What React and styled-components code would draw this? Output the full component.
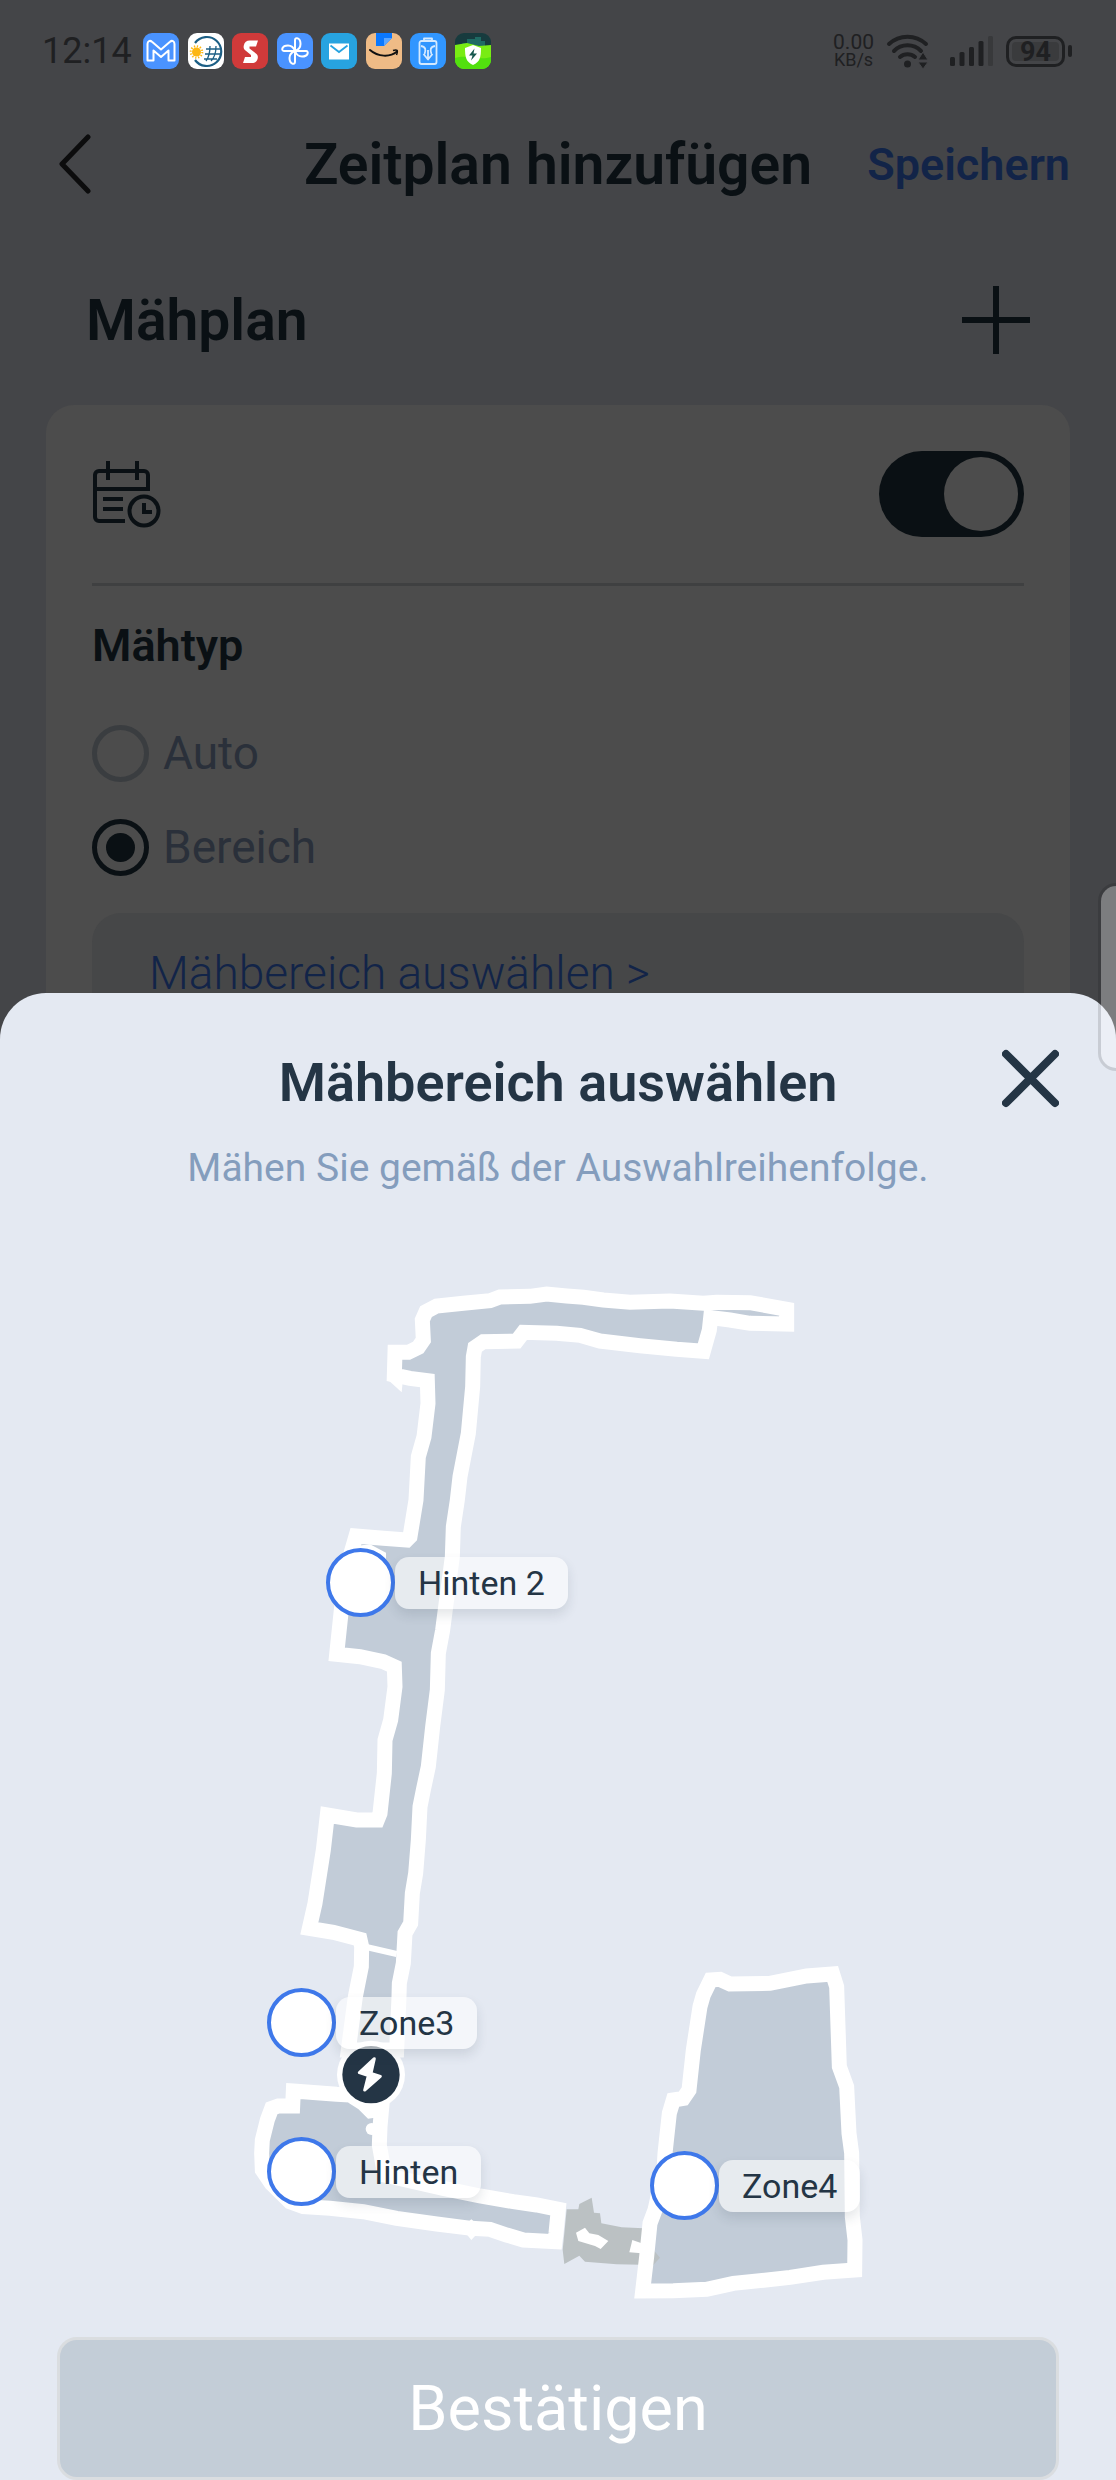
import { useState } from "react";
import styled, { createGlobalStyle } from "styled-components";

const GlobalStyle = createGlobalStyle`
  * {
    box-sizing: border-box;
  }
  body {
    margin: 0;
    background: #444548;
    font-family: Roboto, "Liberation Sans", sans-serif;
  }
  button {
    margin: 0;
    padding: 0;
    border: none;
    background: none;
    font-family: inherit;
    cursor: pointer;
  }
  svg {
    display: block;
    flex: none;
  }
`;

const Screen = styled.div`
  position: relative;
  display: flex;
  flex-direction: column;
  min-height: 100vh;
  overflow: hidden;
`;

const StatusBar = styled.div`
  display: flex;
  align-items: center;
  height: 102px;
  padding: 0 44px 0 42px;
  color: #1f2022;
`;

const Clock = styled.span`
  width: 101px;
  font-size: 36px;
`;

const AppIcons = styled.div`
  display: flex;
  justify-content: space-between;
  width: 348px;
`;

const StatusRight = styled.div`
  display: flex;
  align-items: center;
  gap: 12px;
  margin-left: auto;
`;

const Network = styled.div`
  display: flex;
  align-items: center;
  gap: 12px;
  margin-right: 8px;
`;

const Speed = styled.div`
  display: flex;
  flex-direction: column;
  align-items: center;
  font-size: 21px;
  line-height: 18px;
  & small {
    font-size: 18px;
  }
`;

const Header = styled.header`
  display: grid;
  grid-template-columns: 1fr auto 1fr;
  align-items: center;
  height: 124px;
  padding: 0 46px;
`;

const Title = styled.h1`
  margin: 0;
  font-size: 57px;
  font-weight: 600;
  color: #0a1014;
`;

const BackButton = styled.button`
  justify-self: start;
  && {
    padding: 0 11px;
  }
`;

const SaveButton = styled.button`
  justify-self: end;
  font-size: 45px;
  font-weight: 600;
  color: #122448;
`;

const SectionRow = styled.div`
  display: flex;
  align-items: center;
  justify-content: space-between;
  height: 179px;
  padding: 9px 86px 0;
`;

const SectionTitle = styled.h2`
  margin: 0;
  font-size: 57px;
  font-weight: 600;
  color: #0a1014;
`;

const Card = styled.section`
  margin: 0 46px;
  padding: 0 46px;
  border-radius: 28px 28px 0 0;
  background: #4c4c4c;
`;

const CardTop = styled.div`
  display: flex;
  align-items: center;
  justify-content: space-between;
  height: 181px;
  border-bottom: 3px solid #3f4041;
`;

const Toggle = styled.input`
  appearance: none;
  display: flex;
  align-items: center;
  width: 145px;
  height: 86px;
  margin: 0;
  padding: 0 6px;
  border-radius: 43px;
  background: #0a1014;
  &::before {
    content: "";
    width: 74px;
    height: 74px;
    border-radius: 50%;
    background: #4c4c4c;
  }
  &:checked {
    justify-content: flex-end;
  }
`;

const TypeGroup = styled.fieldset`
  margin: 0;
  padding: 0;
  border: none;
`;

const TypeTitle = styled.legend`
  padding: 0;
  font-size: 45px;
  font-weight: 600;
  line-height: 120px;
  color: #0a1014;
`;

const TypeOption = styled.label`
  display: flex;
  align-items: center;
  gap: 14px;
  height: 94px;
  font-size: 46px;
  color: #2a303a;
`;

const Radio = styled.input`
  appearance: none;
  display: grid;
  place-items: center;
  width: 57px;
  height: 57px;
  margin: 0;
  border: 5px solid #3a3d40;
  border-radius: 50%;
  &:checked {
    border-color: #0a1014;
  }
  &:checked::before {
    content: "";
    width: 29px;
    height: 29px;
    border-radius: 50%;
    background: #0a1014;
  }
`;

const AreaBox = styled.div`
  margin-top: 19px;
  padding: 40px 57px 0;
  border-radius: 29px 29px 0 0;
  background: #464748;
`;

const AreaLink = styled.a`
  display: block;
  font-size: 46px;
  font-weight: 300;
  line-height: 40px;
  color: #122448;
  text-decoration: none;
`;

const Sheet = styled.section`
  flex: 1;
  display: flex;
  flex-direction: column;
  padding: 55px 57px 0;
  border-radius: 46px 46px 0 0;
  background: #e4e9f2;
`;

const SheetHeader = styled.div`
  display: grid;
  grid-template-columns: 1fr auto 1fr;
  align-items: start;
`;

const SheetTitle = styled.h2`
  grid-column: 2;
  margin: 0;
  font-size: 54px;
  font-weight: 600;
  line-height: 70px;
  color: #243545;
`;

const CloseButton = styled.button`
  justify-self: end;
`;

const Hint = styled.p`
  margin: 25px 0 77px;
  font-size: 39px;
  line-height: 50px;
  text-align: center;
  color: #849dbd;
`;

const MapCanvas = styled.div`
  position: relative;
  width: 620px;
  height: 1040px;
  margin: 0 auto 27px;
`;

const Pin = styled.label`
  position: absolute;
  left: ${({ $x }) => $x}px;
  top: ${({ $y }) => $y}px;
  display: flex;
  align-items: center;
`;

const PinCheck = styled.input`
  appearance: none;
  width: 69px;
  height: 69px;
  margin: 0;
  border: 4px solid #3e78ea;
  border-radius: 50%;
  background: #fff;
  &:checked {
    background: #3e78ea;
  }
`;

const PinLabel = styled.span`
  padding: 0 23px;
  border-radius: 14px;
  background: rgba(255, 255, 255, 0.6);
  box-shadow: 0 6px 12px rgba(36, 53, 69, 0.12);
  font-size: 34px;
  line-height: 52px;
  color: #243545;
`;

const ConfirmButton = styled.button`
  height: 143px;
  && {
    border: 3px solid #dadde0;
    background: #c3cdd7;
  }
  border-radius: 20px;
  font-size: 63px;
  color: #fff;
`;

const EdgeHandle = styled.div`
  position: absolute;
  top: 883px;
  right: 0;
  width: 18px;
  height: 188px;
  border: 3px solid rgba(0, 0, 0, 0.12);
  border-right: none;
  border-radius: 26px 0 0 26px;
  background: rgba(255, 255, 255, 0.3);
  background-clip: padding-box;
`;

const AppIcon = ({ fill, children }) => (
  <svg width="36" height="36" viewBox="0 0 36 36">
    <rect width="36" height="36" rx="9" fill={fill} />
    {children}
  </svg>
);

const StatusIcons = () => (
  <AppIcons>
    <AppIcon fill="#4a93ff">
      <path
        d="M4.500 27.500V11c0-3 2.500-4 4.500-2.200l9 7.700 9-7.700c2-1.800 4.500-.8 4.500 2.200v16.500h-6V17.500L18 24l-7.500-6.500v10z"
        fill="none"
        stroke="#fff"
        strokeWidth="2"
        strokeLinejoin="round"
      />
    </AppIcon>
    <AppIcon fill="#fff">
      <path d="M7 10a14.500 14.500 0 1 1 0 17" fill="none" stroke="#1c5f85" strokeWidth="2.200" />
      <path
        d="M22 13c0 6-1 11-4 15M28 13c0 7-2 12-5 15M18 16h14M17 21h15M16 26h13"
        fill="none"
        stroke="#1c5f85"
        strokeWidth="1.300"
      />
      <circle cx="8.500" cy="19" r="4.500" fill="#fdb713" />
      <circle cx="8.500" cy="19" r="5.800" fill="none" stroke="#fdb713" strokeWidth="2" strokeDasharray="1.300 1.700" />
    </AppIcon>
    <AppIcon fill="#d03a3a">
      <path
        d="M26 7.500l-2 6h-6.500v2l7 5.500c1.500 1.500 1.500 3 1.200 4.500-.6 3-2.700 4.500-5.700 4.500h-9l2-6h6v-2l-5.500-4.500c-1.700-1.500-2.200-3-1.700-5 .7-3.300 2.700-5 6-5z"
        fill="#fff"
      />
    </AppIcon>
    <AppIcon fill="#4a93ff">
      <g fill="none" stroke="#fff" strokeWidth="2" strokeLinejoin="round">
        <path d="M18 18V7c0-3 5.500-2.500 5.500 4 0 3-1.500 5.500-5.500 7z" />
        <path d="M18 18h11c3 0 2.500 5.500-4 5.500-3 0-5.500-1.500-7-5.500z" />
        <path d="M18 18v11c0 3-5.500 2.500-5.500-4 0-3 1.500-5.500 5.500-7z" />
        <path d="M18 18H7c-3 0-2.500-5.500 4-5.500 3 0 5.500 1.500 7 5.500z" />
      </g>
    </AppIcon>
    <AppIcon fill="#27a3e0">
      <path d="M8 10.500h20v16H8z" fill="#fff" />
      <path d="M9.500 12.500l8.500 6.500 8.500-6.500" fill="none" stroke="#27a3e0" strokeWidth="1.800" />
    </AppIcon>
    <AppIcon fill="#efbb86">
      <path d="M10 0h16v5l-8 8h-8z" fill="#0b78ff" />
      <path d="M18 5h8l-8 8z" fill="#5aa5ff" />
      <path d="M4 17c8 7 20 7.500 27 1.500" fill="none" stroke="#111" strokeWidth="2" strokeLinecap="round" />
      <path d="M27 17.500c4-1.300 5.500-.5 3.500 4.500" fill="none" stroke="#111" strokeWidth="1.500" />
    </AppIcon>
    <AppIcon fill="#3196ff">
      <g fill="none" stroke="#d5eaff" strokeWidth="1.800" strokeLinejoin="round">
        <rect x="9.500" y="8" width="17" height="23" rx="2" />
        <path d="M14 7.500V5.500h8v2M11 13c5 1 5 4 3.500 8M25 13c-5 1-5 4-3.500 8M18 17v9M13.500 21l4.500 5.500 4.500-5.500" />
      </g>
    </AppIcon>
    <AppIcon fill="#173b3e">
      <path d="M8 10h4V6h8V4h6v4h4v5H4z" fill="#1f6a63" />
      <path d="M0 12l12-2 12 3 12-1v15a9 9 0 0 1-9 9H9a9 9 0 0 1-9-9z" fill="#79ec14" />
      <path d="M0 25c12-4 24 3 36-1v3a9 9 0 0 1-9 9H9a9 9 0 0 1-9-9z" fill="#52e00e" />
      <path d="M18 12l8 3c0 9-1 14-8 17-7-3-8-8-8-17z" fill="#fff" />
      <path d="M19.500 15.500L14 22.500h3.500l-1.500 5 6-7h-3.500z" fill="#17584f" />
    </AppIcon>
  </AppIcons>
);

const WifiIcon = () => (
  <svg width="44" height="36" viewBox="0 0 44 36">
    <g fill="none" stroke="#1f2022" strokeWidth="4" strokeLinecap="round">
      <path d="M3 11a27 27 0 0 1 37 0" />
      <path d="M8 18a19 19 0 0 1 27 0" />
      <path d="M14 24a11.500 11.500 0 0 1 15 0" />
    </g>
    <circle cx="21.500" cy="31" r="3.500" fill="#1f2022" />
    <path d="M37 19l5 8H32zM37 36l5-7H32z" fill="#1f2022" stroke="#444548" strokeWidth="1" />
  </svg>
);

const SignalIcon = () => (
  <svg width="44" height="30" viewBox="0 0 44 30">
    <g fill="#1f2022">
      <rect y="21" width="5" height="9" rx="1.500" />
      <rect x="9.500" y="16" width="5" height="14" rx="1.500" />
      <rect x="19" y="11" width="5" height="19" rx="1.500" />
      <rect x="28.500" y="5" width="5" height="25" rx="1.500" />
    </g>
    <rect x="38" width="5" height="30" rx="1.500" fill="#38393b" />
  </svg>
);

const Battery = styled.div`
  display: flex;
  align-items: center;
  gap: 3px;
  &::after {
    content: "";
    width: 4px;
    height: 12px;
    border-radius: 2px;
    background: #1f2022;
  }
`;

const BatteryLevel = styled.span`
  width: 59px;
  height: 31px;
  padding: 3px;
  border: 3px solid #1f2022;
  border-radius: 10px;
  background: #3a3b3d content-box;
  font-size: 27px;
  font-weight: 700;
  line-height: 20px;
  text-align: center;
`;

const BackIcon = () => (
  <svg width="34" height="60" viewBox="0 0 34 60" fill="none" stroke="#0c0c0d">
    <path d="M31 3L5 30l26 27" strokeWidth="5" strokeLinecap="round" strokeLinejoin="round" />
  </svg>
);

const PlusIcon = () => (
  <svg width="68" height="68" viewBox="0 0 68 68" stroke="#0a1014" strokeWidth="6">
    <path d="M34 0v68M0 34h68" />
  </svg>
);

const CalendarIcon = () => (
  <svg width="70" height="68" viewBox="0 0 70 68" fill="none" stroke="#0a1014" strokeWidth="4">
    <path d="M56 31V15a4 4 0 0 0-4-4H7a4 4 0 0 0-4 4v42a4 4 0 0 0 4 4h26M3 29h53" />
    <path d="M16 1v19M45 1v19M11 39h20M11 49h20" />
    <circle cx="52" cy="51" r="14.500" />
    <path d="M52 43v9h8" />
  </svg>
);

const CloseIcon = () => (
  <svg width="57" height="60" viewBox="0 0 57 60" stroke="#243545">
    <path d="M4 6l49 49M53 6L4 55" strokeWidth="8" strokeLinecap="round" />
  </svg>
);

const LONG_ZONE =
  "M441 247L481 247 511 232 526 210 523 150 534 125 566 108 646 100 726 92 756 81 846 79 896 72 956 78 1006 82 1066 90 1146 97 1266 93 1366 100 1406 97 1506 98 1616 118 1616 162 1506 160 1446 150 1388 143 1384 180 1366 244 1286 238 1176 227 1056 213 996 196 926 190 826 187 806 213 706 215 681 232 676 260 674 350 661 490 636 620 628 690 616 770 613 860 593 1010 584 1080 571 1150 568 1260 554 1370 541 1490 526 1560 516 1610 511 1710 503 1810 493 1870 488 1960 471 1990 466 2080 454 2140 453 2180 446 2340 301 2340 322 2180 340 2090 341 2030 336 2008 256 1987 184 1975 201 1900 226 1740 238 1635 326 1650 388 1650 396 1630 409 1510 411 1410 428 1350 441 1250 439 1190 406 1175 336 1160 266 1153 281 1010 306 860 324 798 406 805 476 810 486 800 504 690 511 560 528 500 540 400 538 332 486 325 439 315Z";

const BACK_ZONE =
  "M136 2463L266 2473 306 2475 346 2500 376 2530 404 2480 396 2570 394 2625 410 2715 586 2755 696 2778 796 2795 866 2805 931 2818 924 2890 921 2915 826 2910 776 2895 726 2878 670 2875 566 2862 446 2845 346 2825 246 2815 166 2810 126 2795 70 2740 43 2700 41 2650 43 2610 58 2550 71 2515 91 2508 134 2508Z";

const RIGHT_ZONE =
  "M1388 2130L1416 2128 1446 2142 1566 2140 1676 2118 1754 2112 1766 2150 1774 2390 1796 2450 1803 2590 1811 2650 1813 2840 1821 2910 1820 3000 1726 3007 1626 3022 1536 3032 1456 3040 1376 3058 1276 3062 1184 3063 1196 2960 1206 2860 1221 2820 1248 2700 1251 2650 1264 2530 1276 2490 1306 2485 1323 2460 1336 2340 1356 2210 1366 2175Z";

const GardenMap = () => (
  <svg width="100%" height="100%" viewBox="0 0 1860 3120">
    <g fill="#c2ccd8">
      <path d={LONG_ZONE} />
      <path d={BACK_ZONE} />
      <path d={RIGHT_ZONE} />
    </g>
    <path
      d="M956 2818L991 2818 994 2802 1031 2783 1038 2828 1056 2830 1060 2860 1121 2872 1186 2875 1221 2945 1236 2963 1216 2985 1106 2983 1011 2975 994 2957 949 2982 944 2940Z"
      fill="#bbc1c3"
    />
    <g fill="none" stroke="#fff" strokeWidth="45" strokeMiterlimit="1.600">
      <path d={LONG_ZONE} />
      <path d={BACK_ZONE} />
      <path d={RIGHT_ZONE} />
      <path d="M355 2031L446 2052" strokeWidth="18" />
    </g>
    <g fill="#fff">
      <path d="M418 328L461 367 464 335Z" />
      <path d="M306 830L366 823 414 848 414 870 336 870Z" />
      <path d="M656 2893L670 2910 686 2893ZM656 2860L670 2848 684 2860Z" />
      <path d="M984 2888L1011 2873 1024 2890 1051 2895 1081 2913 1058 2937 1041 2928 991 2913Z" />
      <path d="M1153 2910L1181 2920 1181 2950 1144 2947Z" />
      <circle cx="371" cy="2577" r="18" />
      <circle cx="369" cy="2414" r="102" />
    </g>
    <circle cx="369" cy="2414" r="86" fill="#243545" />
    <path
      d="M379 2366L334 2408 361 2417 350 2460 397 2419 369 2410Z"
      fill="#fff"
      stroke="#fff"
      strokeWidth="9"
      strokeLinejoin="round"
    />
  </svg>
);

const zones = [
  { name: "Hinten 2", x: 78, y: 278 },
  { name: "Zone3", x: 19, y: 718 },
  { name: "Hinten", x: 19, y: 867 },
  { name: "Zone4", x: 402, y: 881 },
];

const App = () => {
  const [enabled, setEnabled] = useState(true);
  const [type, setType] = useState("Bereich");

  return (
    <Screen>
      <GlobalStyle />
      <StatusBar>
        <Clock>12:14</Clock>
        <StatusIcons />
        <StatusRight>
          <Network>
            <Speed>
              <span>0.00</span>
              <small>KB/s</small>
            </Speed>
            <WifiIcon />
          </Network>
          <SignalIcon />
          <Battery>
            <BatteryLevel>94</BatteryLevel>
          </Battery>
        </StatusRight>
      </StatusBar>
      <Header>
        <BackButton aria-label="Zurück">
          <BackIcon />
        </BackButton>
        <Title>Zeitplan hinzufügen</Title>
        <SaveButton>Speichern</SaveButton>
      </Header>
      <SectionRow>
        <SectionTitle>Mähplan</SectionTitle>
        <button aria-label="Hinzufügen">
          <PlusIcon />
        </button>
      </SectionRow>
      <Card>
        <CardTop>
          <CalendarIcon />
          <Toggle
            type="checkbox"
            role="switch"
            aria-label="Mähplan"
            checked={enabled}
            onChange={() => setEnabled(!enabled)}
          />
        </CardTop>
        <TypeGroup>
          <TypeTitle>Mähtyp</TypeTitle>
          {["Auto", "Bereich"].map((name) => (
            <TypeOption key={name}>
              <Radio
                type="radio"
                name="type"
                checked={type === name}
                onChange={() => setType(name)}
              />
              {name}
            </TypeOption>
          ))}
        </TypeGroup>
        <AreaBox>
          <AreaLink href="#sheet">Mähbereich auswählen &gt;</AreaLink>
        </AreaBox>
      </Card>
      <Sheet id="sheet">
        <SheetHeader>
          <SheetTitle>Mähbereich auswählen</SheetTitle>
          <CloseButton aria-label="Schließen">
            <CloseIcon />
          </CloseButton>
        </SheetHeader>
        <Hint>Mähen Sie gemäß der Auswahlreihenfolge.</Hint>
        <MapCanvas>
          <GardenMap />
          {zones.map(({ name, x, y }) => (
            <Pin key={name} $x={x} $y={y}>
              <PinCheck type="checkbox" />
              <PinLabel>{name}</PinLabel>
            </Pin>
          ))}
        </MapCanvas>
        <ConfirmButton>Bestätigen</ConfirmButton>
      </Sheet>
      <EdgeHandle />
    </Screen>
  );
};

export default App;
